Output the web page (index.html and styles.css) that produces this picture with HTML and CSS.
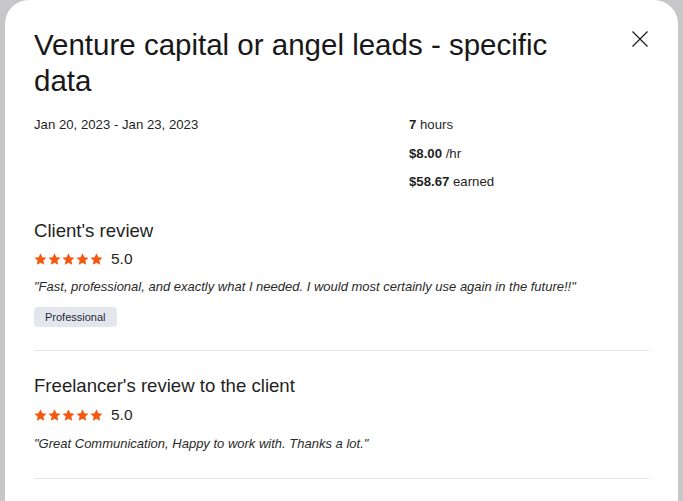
FILE: index.html
```html
<!DOCTYPE html>
<html lang="en">
<head>
<meta charset="utf-8">
<title>Contract details</title>
<link rel="stylesheet" href="styles.css">
</head>
<body>
<div class="backdrop">
  <section class="modal">
    <header class="modal-head">
      <h1 class="modal-title">Venture capital or angel leads - specific data</h1>
      <button class="close" aria-label="Close">
        <svg width="18" height="18" viewBox="0 0 18 18"><path d="M1.5 1.5 L16.5 16.5 M16.5 1.5 L1.5 16.5" stroke="#1f1f1f" stroke-width="1.3" fill="none"/></svg>
      </button>
    </header>

    <div class="summary">
      <p class="dates">Jan 20, 2023 - Jan 23, 2023</p>
      <ul class="stats">
        <li><strong>7</strong> hours</li>
        <li><strong>$8.00</strong> /hr</li>
        <li><strong>$58.67</strong> earned</li>
      </ul>
    </div>

    <section class="review">
      <h2 class="review-title">Client's review</h2>
      <div class="rating">
        <span class="stars">
          <svg viewBox="0 0 14 14"><path d="M7 0.4 L9 4.5 L13.5 5 L10.1 8.1 L11 12.6 L7 10.4 L3 12.6 L3.9 8.1 L0.5 5 L5 4.5 Z"/></svg>
          <svg viewBox="0 0 14 14"><path d="M7 0.4 L9 4.5 L13.5 5 L10.1 8.1 L11 12.6 L7 10.4 L3 12.6 L3.9 8.1 L0.5 5 L5 4.5 Z"/></svg>
          <svg viewBox="0 0 14 14"><path d="M7 0.4 L9 4.5 L13.5 5 L10.1 8.1 L11 12.6 L7 10.4 L3 12.6 L3.9 8.1 L0.5 5 L5 4.5 Z"/></svg>
          <svg viewBox="0 0 14 14"><path d="M7 0.4 L9 4.5 L13.5 5 L10.1 8.1 L11 12.6 L7 10.4 L3 12.6 L3.9 8.1 L0.5 5 L5 4.5 Z"/></svg>
          <svg viewBox="0 0 14 14"><path d="M7 0.4 L9 4.5 L13.5 5 L10.1 8.1 L11 12.6 L7 10.4 L3 12.6 L3.9 8.1 L0.5 5 L5 4.5 Z"/></svg>
        </span>
        <span class="score">5.0</span>
      </div>
      <p class="quote">"Fast, professional, and exactly what I needed. I would most certainly use again in the future!!"</p>
      <span class="tag">Professional</span>
    </section>

    <section class="review review-client">
      <h2 class="review-title">Freelancer's review to the client</h2>
      <div class="rating">
        <span class="stars">
          <svg viewBox="0 0 14 14"><path d="M7 0.4 L9 4.5 L13.5 5 L10.1 8.1 L11 12.6 L7 10.4 L3 12.6 L3.9 8.1 L0.5 5 L5 4.5 Z"/></svg>
          <svg viewBox="0 0 14 14"><path d="M7 0.4 L9 4.5 L13.5 5 L10.1 8.1 L11 12.6 L7 10.4 L3 12.6 L3.9 8.1 L0.5 5 L5 4.5 Z"/></svg>
          <svg viewBox="0 0 14 14"><path d="M7 0.4 L9 4.5 L13.5 5 L10.1 8.1 L11 12.6 L7 10.4 L3 12.6 L3.9 8.1 L0.5 5 L5 4.5 Z"/></svg>
          <svg viewBox="0 0 14 14"><path d="M7 0.4 L9 4.5 L13.5 5 L10.1 8.1 L11 12.6 L7 10.4 L3 12.6 L3.9 8.1 L0.5 5 L5 4.5 Z"/></svg>
          <svg viewBox="0 0 14 14"><path d="M7 0.4 L9 4.5 L13.5 5 L10.1 8.1 L11 12.6 L7 10.4 L3 12.6 L3.9 8.1 L0.5 5 L5 4.5 Z"/></svg>
        </span>
        <span class="score">5.0</span>
      </div>
      <p class="quote">"Great Communication, Happy to work with. Thanks a lot."</p>
    </section>
  </section>
</div>
</body>
</html>
```

FILE: styles.css
```css
* { box-sizing: border-box; }

html, body {
  margin: 0;
  height: 100%;
  overflow: hidden;
}

body {
  background: #c7c7c9;
  font-family: "Liberation Sans", Arial, sans-serif;
  color: #1f1f1f;
}

.backdrop {
  height: 100%;
  padding: 0 5px;
}

.modal {
  background: #fff;
  height: 100%;
  border-radius: 24px 24px 0 0;
  padding: 27px 29px 0;
}

.modal-head {
  display: flex;
  align-items: flex-start;
  justify-content: space-between;
  gap: 40px;
}

.modal-title {
  margin: 0;
  font-size: 29.5px;
  font-weight: 400;
  line-height: 36px;
  max-width: 530px;
  color: #181818;
}

.close {
  border: 0;
  background: none;
  padding: 0;
  margin: 3px 0 0;
  width: 18px;
  height: 18px;
  cursor: pointer;
}
.close svg { display: block; }

.summary {
  display: grid;
  grid-template-columns: 375px 1fr;
  margin-top: 17px;
  margin-bottom: 6px;
  font-size: 13.2px;
}

.dates { margin: 0; line-height: 18px; }

.stats {
  list-style: none;
  margin: 0;
  padding: 0;
  display: flex;
  flex-direction: column;
  gap: 10.5px;
}
.stats li { line-height: 18px; }
.stats strong { font-weight: 700; }

.review {
  border-bottom: 1px solid #e1e5eb;
  padding: 22px 0 23px;
}

.review-title {
  margin: 0;
  font-size: 18.6px;
  font-weight: 400;
  line-height: 24px;
}

.rating {
  display: flex;
  align-items: center;
  gap: 8px;
  margin-top: 7px;
  height: 18px;
}

.stars { display: flex; gap: 1px; }
.stars svg { width: 13px; height: 13px; display: block; fill: #f4590f; }

.score { font-size: 15.5px; }

.quote {
  margin: 10px 0 0;
  font-size: 13px;
  font-style: italic;
  line-height: 18px;
  color: #2a2a2a;
}

.review-client { padding: 23px 0 25px; }
.review-client .rating { margin-top: 8px; }
.review-client .quote { margin-top: 11px; }

.tag {
  display: inline-block;
  margin-top: 11px;
  background: #e3e7ed;
  border-radius: 4px;
  padding: 0 11px;
  font-size: 11px;
  line-height: 20px;
  color: #1e2a3a;
}
```
